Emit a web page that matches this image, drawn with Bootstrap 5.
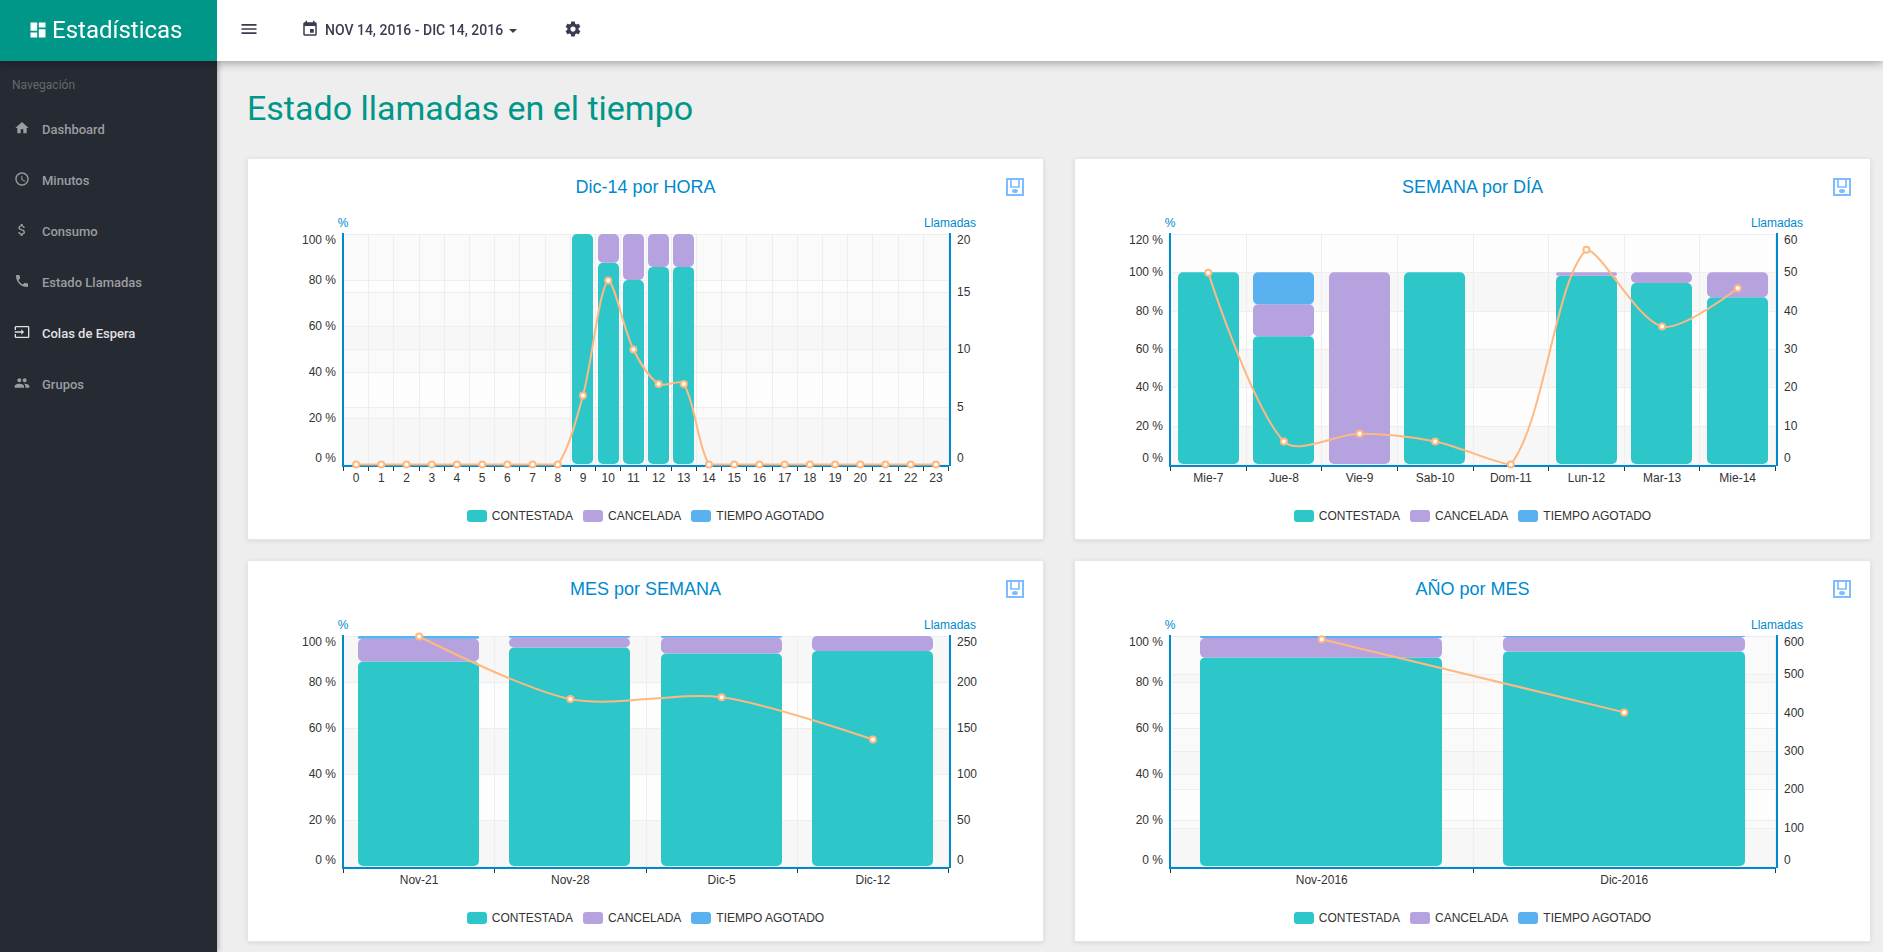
<!DOCTYPE html>
<html lang="es">
<head>
<meta charset="utf-8">
<meta name="viewport" content="width=device-width, initial-scale=1">
<title>Estadísticas</title>
<link href="https://cdn.jsdelivr.net/npm/bootstrap@5.3.0/dist/css/bootstrap.min.css" rel="stylesheet">
<style>
  :root { --teal: #009688; --ink: #3a3d51; --chart-blue: #008acd; --side-w: 217px; --bar-h: 61px; }
  body { font-family: Roboto, "Liberation Sans", sans-serif; background: #eee; }
  .icon { fill: currentColor; display: block; flex: none; }
  .i-16 { width: 16px; height: 16px; }
  .i-18 { width: 18px; height: 18px; }
  .i-20 { width: 20px; height: 20px; }

  .topbar { height: var(--bar-h); padding-bottom: 2px; box-shadow: 0 1px 10px rgba(0, 0, 0, .4); z-index: 1030; }
  .brand { width: var(--side-w); background: var(--teal); color: #fff; font-size: 24px; line-height: 32px; gap: 4px; padding: 0 0 2px 28px; margin-bottom: -2px; }
  .tool { color: var(--ink); border: 0; background: none; padding: 0; font-size: 14px; line-height: 20px; font-weight: 500; }
  .tool-list { gap: 42px; padding-left: 22px; }
  .tool .icon { margin-bottom: 2px; }
  .date-toggle { gap: 6px; padding-right: 5px; }
  .date-toggle::after { margin-left: 0; border-width: 4px; border-bottom: 0; margin-top: 2px; }

  .sidebar { width: var(--side-w); background: #262a33; box-shadow: 1px 0 5px rgba(0, 0, 0, .3); min-height: calc(100vh - var(--bar-h)); }
  .side-title { color: #66686c; font-size: 12px; line-height: 20px; padding: 14px 12px 9px; margin: 0; }
  .side-link { color: #9c9da1; font-size: 13px; font-weight: 500; line-height: 19px; padding: 16px 14px; gap: 12px; }
  .side-link .icon { margin-bottom: 3px; }
  .side-link:hover, .side-link.active { color: #e0e0e1; }

  .content { padding: 27px 12px 10px 30px; min-width: 0; }
  .page-title { color: var(--teal); font-size: 34px; line-height: 40px; font-weight: 400; margin: 0 0 30px; }
  .chart-row { --bs-gutter-x: 30px; --bs-gutter-y: 20px; }
  .chart-card { border: 1px solid #e1e9e7; border-radius: 2px; box-shadow: 0 1px 4px rgba(0, 0, 0, .1); font-family: "Liberation Sans", Arial, sans-serif; }
  .chart-head { padding: 16px 19px 0; }
  .chart-head::before { content: ""; width: 18px; }
  .chart-title { color: var(--chart-blue); font-size: 18px; line-height: 24px; font-weight: 400; }
  .save-btn { color: #7dbcff; padding: 0; border: 0; background: none; }
  .plot { display: block; width: 100%; height: 290px; font-size: 12px; fill: #333; }
  .plot .axis-name { fill: var(--chart-blue); }
  .legend-list { font-size: 12px; line-height: 18px; color: #333; gap: 10px; margin: 18px 0 14px; }
  .legend-list li { gap: 5px; }
  .swatch { width: 20px; height: 12px; border-radius: 3px; }
  .s-contestada { background: #2ec7c9; }
  .s-cancelada { background: #b6a2de; }
  .s-agotado { background: #5ab1ef; }
</style>
</head>
<body>

<header class="topbar d-flex bg-white sticky-top">
  <a href="#" class="brand d-flex align-items-center text-decoration-none">
    <svg class="icon i-20" viewBox="0 0 24 24"><path d="M3 13h8V3H3v10zm0 8h8v-6H3v6zm10 0h8V11h-8v10zm0-18v6h8V3h-8z"/></svg>
    <span>Estadísticas</span>
  </a>
  <div class="tool-list d-flex align-items-center">
    <button type="button" class="tool" aria-label="Menú">
      <svg class="icon i-20" viewBox="0 0 24 24"><path d="M3 18h18v-2H3v2zm0-5h18v-2H3v2zm0-7v2h18V6H3z"/></svg>
    </button>
    <button type="button" class="tool date-toggle dropdown-toggle d-flex align-items-center" aria-expanded="false">
      <svg class="icon i-18" viewBox="0 0 24 24"><path d="M17 12h-5v5h5v-5zM16 1v2H8V1H6v2H5c-1.11 0-1.99.9-1.99 2L3 19c0 1.1.89 2 2 2h14c1.1 0 2-.9 2-2V5c0-1.1-.9-2-2-2h-1V1h-2zm3 18H5V8h14v11z"/></svg>
      <span>NOV 14, 2016 - DIC 14, 2016</span>
    </button>
    <button type="button" class="tool" aria-label="Configuración">
      <svg class="icon i-18" viewBox="0 0 24 24"><path d="M19.43 12.98c.04-.32.07-.64.07-.98s-.03-.66-.07-.98l2.11-1.65c.19-.15.24-.42.12-.64l-2-3.46c-.12-.22-.39-.3-.61-.22l-2.49 1c-.52-.4-1.08-.73-1.69-.98l-.38-2.65C14.46 2.18 14.25 2 14 2h-4c-.25 0-.46.18-.49.42l-.38 2.65c-.61.25-1.17.59-1.69.98l-2.49-1c-.23-.09-.49 0-.61.22l-2 3.46c-.13.22-.07.49.12.64l2.11 1.65c-.04.32-.07.65-.07.98s.03.66.07.98l-2.11 1.65c-.19.15-.24.42-.12.64l2 3.46c.12.22.39.3.61.22l2.49-1c.52.4 1.08.73 1.69.98l.38 2.65c.03.24.24.42.49.42h4c.25 0 .46-.18.49-.42l.38-2.65c.61-.25 1.17-.59 1.69-.98l2.49 1c.23.09.49 0 .61-.22l2-3.46c.12-.22.07-.49-.12-.64l-2.11-1.65zM12 15.5c-1.93 0-3.5-1.57-3.5-3.5s1.57-3.5 3.5-3.5 3.5 1.57 3.5 3.5-1.57 3.5-3.5 3.5z"/></svg>
    </button>
  </div>
</header>

<div class="d-flex">
  <nav class="sidebar flex-shrink-0" aria-label="Navegación">
    <p class="side-title">Navegación</p>
    <ul class="nav flex-column">
      <li><a class="side-link d-flex align-items-center text-decoration-none" href="#"><svg class="icon i-16" viewBox="0 0 24 24"><path d="M10 20v-6h4v6h5v-8h3L12 3 2 12h3v8z"/></svg>Dashboard</a></li>
      <li><a class="side-link d-flex align-items-center text-decoration-none" href="#"><svg class="icon i-16" viewBox="0 0 24 24"><path d="M11.99 2C6.47 2 2 6.48 2 12s4.47 10 9.99 10C17.52 22 22 17.52 22 12S17.52 2 11.99 2zM12 20c-4.42 0-8-3.58-8-8s3.58-8 8-8 8 3.58 8 8-3.58 8-8 8zm.5-13H11v6l5.25 3.15.75-1.23-4.5-2.67z"/></svg>Minutos</a></li>
      <li><a class="side-link d-flex align-items-center text-decoration-none" href="#"><svg class="icon i-16" viewBox="0 0 24 24"><path d="M11.8 10.9c-2.27-.59-3-1.2-3-2.15 0-1.09 1.01-1.85 2.7-1.85 1.78 0 2.44.85 2.5 2.1h2.21c-.07-1.72-1.12-3.3-3.21-3.81V3h-3v2.16c-1.94.42-3.5 1.68-3.5 3.61 0 2.31 1.91 3.46 4.7 4.13 2.5.6 3 1.48 3 2.41 0 .69-.49 1.79-2.7 1.79-2.06 0-2.87-.92-2.98-2.1h-2.2c.12 2.19 1.76 3.42 3.68 3.83V21h3v-2.15c1.95-.37 3.5-1.5 3.5-3.55 0-2.84-2.43-3.81-4.7-4.4z"/></svg>Consumo</a></li>
      <li><a class="side-link d-flex align-items-center text-decoration-none" href="#"><svg class="icon i-16" viewBox="0 0 24 24"><path d="M6.62 10.79c1.44 2.83 3.76 5.14 6.59 6.59l2.2-2.2c.27-.27.67-.36 1.02-.24 1.12.37 2.33.57 3.57.57.55 0 1 .45 1 1V20c0 .55-.45 1-1 1-9.39 0-17-7.61-17-17 0-.55.45-1 1-1h3.5c.55 0 1 .45 1 1 0 1.25.2 2.45.57 3.57.11.35.03.74-.25 1.02l-2.2 2.2z"/></svg>Estado Llamadas</a></li>
      <li><a class="side-link active d-flex align-items-center text-decoration-none" href="#" aria-current="page"><svg class="icon i-16" viewBox="0 0 24 24"><path d="M21 3.01H3c-1.1 0-2 .9-2 2V9h2V4.99h18v14.03H3V15H1v4.01c0 1.1.9 1.98 2 1.98h18c1.1 0 2-.88 2-1.98v-14c0-1.11-.9-2-2-2zM11 16l4-4-4-4v3H1v2h10v3z"/></svg>Colas de Espera</a></li>
      <li><a class="side-link d-flex align-items-center text-decoration-none" href="#"><svg class="icon i-16" viewBox="0 0 24 24"><path d="M16 11c1.66 0 2.99-1.34 2.99-3S17.66 5 16 5c-1.66 0-3 1.34-3 3s1.34 3 3 3zm-8 0c1.66 0 2.99-1.34 2.99-3S9.66 5 8 5C6.34 5 5 6.34 5 8s1.34 3 3 3zm0 2c-2.33 0-7 1.17-7 3.5V19h14v-2.5c0-2.33-4.67-3.5-7-3.5zm8 0c-.29 0-.62.02-.97.05 1.16.84 1.97 1.97 1.97 3.45V19h6v-2.5c0-2.33-4.67-3.5-7-3.5z"/></svg>Grupos</a></li>
    </ul>
  </nav>

  <main class="content flex-grow-1">
    <h1 class="page-title">Estado llamadas en el tiempo</h1>
    <div class="row chart-row" id="charts"></div>
  </main>
</div>

<template id="card-template">
  <div class="col-12 col-lg-6">
    <section class="card chart-card">
      <div class="chart-head d-flex align-items-center">
        <h2 class="chart-title flex-grow-1 text-center m-0"></h2>
        <button type="button" class="save-btn" aria-label="Guardar imagen">
          <svg class="i-18 d-block" viewBox="0 0 18 18" fill="none" stroke="currentColor" stroke-width="2"><path d="M1 1h16v16H1z"/><path d="M5 1v8h8V1" stroke-width="1.7"/><ellipse cx="9" cy="13" rx="2" ry="1.1"/></svg>
        </button>
      </div>
      <svg class="plot" role="img"></svg>
      <ul class="legend-list list-unstyled d-flex justify-content-center">
        <li class="d-flex align-items-center"><span class="swatch s-contestada"></span>CONTESTADA</li>
        <li class="d-flex align-items-center"><span class="swatch s-cancelada"></span>CANCELADA</li>
        <li class="d-flex align-items-center"><span class="swatch s-agotado"></span>TIEMPO AGOTADO</li>
      </ul>
    </section>
  </div>
</template>

<script src="https://cdn.jsdelivr.net/npm/bootstrap@5.3.0/dist/js/bootstrap.bundle.min.js"></script>
<script>
// bars: [contestada, cancelada, tiempo agotado] in percent; calls: totals on the right axis
const none = [0, 0, 0];
const hours = Array.from({ length: 24 }, (_, i) => String(i));
const hourBars = hours.map(() => none);
hourBars[9] = [100, 0, 0];
hourBars[10] = [87.5, 12.5, 0];
hourBars[11] = [80, 20, 0];
hourBars[12] = hourBars[13] = [85.7, 14.3, 0];
const hourCalls = hours.map(() => 0);
hourCalls.splice(9, 5, 6, 16, 10, 7, 7);

const charts = [
  { title: 'Dic-14 por HORA', left: [100, 20], right: [20, 5], labels: hours, bars: hourBars, calls: hourCalls },
  { title: 'SEMANA por DÍA', left: [120, 20], right: [60, 10],
    labels: ['Mie-7', 'Jue-8', 'Vie-9', 'Sab-10', 'Dom-11', 'Lun-12', 'Mar-13', 'Mie-14'],
    bars: [[100, 0, 0], [66.7, 16.6, 16.7], [0, 100, 0], [100, 0, 0], none, [98.2, 1.8, 0], [94.4, 5.6, 0], [87, 13, 0]],
    calls: [50, 6, 8, 6, 0, 56, 36, 46] },
  { title: 'MES por SEMANA', left: [100, 20], right: [250, 50],
    labels: ['Nov-21', 'Nov-28', 'Dic-5', 'Dic-12'],
    bars: [[88.9, 9.9, 1.2], [95, 4.2, 0.8], [92.4, 6.8, 0.8], [93.5, 6.5, 0]],
    calls: [250, 182, 184, 138] },
  { title: 'AÑO por MES', left: [100, 20], right: [600, 100],
    labels: ['Nov-2016', 'Dic-2016'],
    bars: [[90.6, 8.5, 0.9], [93.3, 6.3, 0.4]],
    calls: [593, 402] }
];
const colors = ['#2ec7c9', '#b6a2de', '#5ab1ef'];
const pad = 95, top0 = 35, plotH = 230, base = top0 + plotH;

function smoothPath(pts) {
  const ys = pts.map(p => p[1]), lo = Math.min(...ys), hi = Math.max(...ys);
  const clamp = y => Math.max(lo, Math.min(hi, y));
  const cps = pts.map((p, i) => {
    const a = pts[i - 1], b = pts[i + 1];
    if (!a || !b) return [p, p];
    const d0 = Math.hypot(p[0] - a[0], p[1] - a[1]), d1 = Math.hypot(p[0] - b[0], p[1] - b[1]);
    const vx = (b[0] - a[0]) * 0.3, vy = (b[1] - a[1]) * 0.3, k0 = d0 / (d0 + d1), k1 = d1 / (d0 + d1);
    return [[p[0] - vx * k0, clamp(p[1] - vy * k0)], [p[0] + vx * k1, clamp(p[1] + vy * k1)]];
  });
  return 'M' + pts[0] + pts.slice(1).map((p, i) => ` C${cps[i][1]} ${cps[i + 1][0]} ${p}`).join('');
}

function draw(svg, c) {
  const w = svg.clientWidth, pw = w - 2 * pad, n = c.labels.length, band = pw / n;
  const right = pad + pw;
  let areas = '', lines = '', text = '', bars = '', dots = '';

  [[c.left, pad - 7, 'end', ' %'], [c.right, right + 9, 'start', '']].forEach(([[max, step], x, anchor, unit]) => {
    for (let v = 0; v <= max; v += step) {
      const y = Math.round(base - v / max * plotH);
      lines += `<path d="M${pad} ${y + .5}H${right}"/>`;
      if (v < max) {
        const y2 = Math.round(base - (v + step) / max * plotH);
        areas += `<rect x="${pad}" y="${y2}" width="${pw}" height="${y - y2}" fill="${(v / step) % 2 ? 'rgba(250,250,250,.1)' : 'rgba(200,200,200,.08)'}"/>`;
      }
      const ty = (v === 0 ? y - 6 : v === max ? y + 6 : y) + 4;
      text += `<text x="${x}" y="${ty}" text-anchor="${anchor}">${v}${unit}</text>`;
    }
  });

  let ticks = '';
  for (let i = 0; i <= n; i++) {
    const x = Math.round(pad + i * band) + .5;
    lines += `<path d="M${x} ${top0}V${base}"/>`;
    ticks += `<path d="M${x} ${base + 3}v4"/>`;
  }
  const pts = [];
  c.labels.forEach((label, i) => {
    const cx = pad + (i + .5) * band + .5;
    text += `<text x="${cx}" y="${base + 18}" text-anchor="middle">${label}</text>`;
    let sum = 0;
    const x0 = Math.round(cx - .5 - band * .4), bw = Math.ceil(band * .8);
    c.bars[i].forEach((v, s) => {
      if (!v) return;
      const y1 = base - sum / c.left[0] * plotH, y2 = base - (sum + v) / c.left[0] * plotH, h = y1 - y2;
      bars += `<rect x="${x0}" y="${y2}" width="${bw}" height="${h}" rx="${Math.min(5, h / 2)}" fill="${colors[s]}"/>`;
      sum += v;
    });
    const y = base - c.calls[i] / c.right[0] * plotH + .5;
    pts.push([cx, y]);
    dots += `<circle cx="${cx}" cy="${y}" r="3"/>`;
  });

  svg.setAttribute('aria-label', c.title);
  svg.innerHTML = areas + `<g stroke="#eee">${lines}</g>`
    + `<g stroke="#333">${ticks}</g>${bars}`
    + `<path d="M${pad} ${top0 - 1}V${base + 3}M${pad - 1} ${base + 2}H${right + 1}M${right + 2} ${top0 - 1}V${base + 2}" fill="none" stroke="#008acd" stroke-width="2"/>`
    + `<path d="${smoothPath(pts)}" fill="none" stroke="#ffb980" stroke-width="2"/>`
    + `<g fill="#fff" stroke="#ffb980" stroke-width="2">${dots}</g>${text}`
    + `<text class="axis-name" x="${pad}" y="28" text-anchor="middle">%</text>`
    + `<text class="axis-name" x="${right + 2}" y="28" text-anchor="middle">Llamadas</text>`;
}

const host = document.getElementById('charts'), tpl = document.getElementById('card-template');
charts.forEach(c => {
  const node = tpl.content.cloneNode(true);
  node.querySelector('.chart-title').textContent = c.title;
  c.svg = node.querySelector('.plot');
  host.append(node);
});
const drawAll = () => charts.forEach(c => draw(c.svg, c));
drawAll();
addEventListener('resize', drawAll);
</script>
</body>
</html>
